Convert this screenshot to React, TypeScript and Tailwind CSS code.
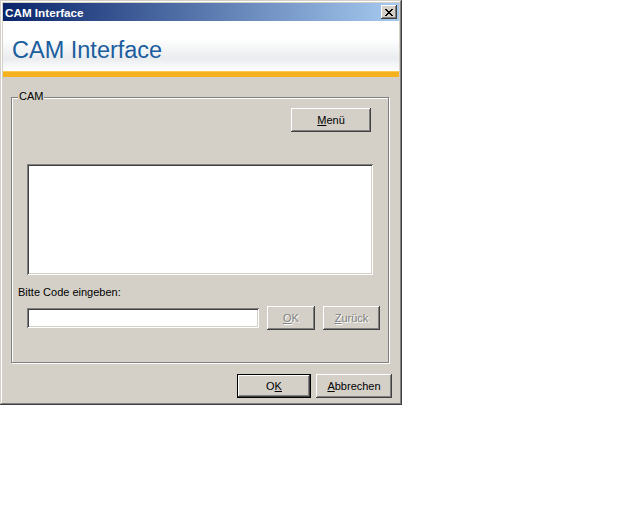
import React from "react";

const raised =
  "shadow-[inset_-1px_-1px_#404040,inset_1px_1px_#ffffff,inset_-2px_-2px_#808080,inset_2px_2px_#d4d0c8]";
const sunken =
  "shadow-[inset_1px_1px_#808080,inset_-1px_-1px_#ffffff,inset_2px_2px_#404040,inset_-2px_-2px_#d4d0c8]";

function Btn({
  children,
  w,
  disabled,
  def,
}: {
  children: React.ReactNode;
  w: string;
  disabled?: boolean;
  def?: boolean;
}) {
  if (def) {
    return (
      <div className={`${w} h-[24px] border border-black bg-[#d4d0c8]`}>
        <div
          className={`w-full h-full flex items-center justify-center ${raised} text-black`}
        >
          {children}
        </div>
      </div>
    );
  }
  return (
    <div
      className={`${w} h-[24px] bg-[#d4d0c8] flex items-center justify-center ${raised} ${
        disabled ? "text-[#808080] [text-shadow:1px_1px_#ffffff]" : "text-black"
      }`}
    >
      {children}
    </div>
  );
}

export default function App() {
  return (
    <div
      className="w-[640px] h-[512px] bg-white"
      style={{ fontFamily: '"Liberation Sans", Arial, sans-serif' }}
    >
      <div className="w-[402px] h-[405px] bg-[#d4d0c8] p-[3px] flex flex-col shadow-[inset_-1px_-1px_#404040,inset_1px_1px_#d4d0c8,inset_-2px_-2px_#808080,inset_2px_2px_#ffffff] text-[11px] leading-[13px]">
        {/* Title bar */}
        <div className="h-[18px] flex items-center justify-between bg-[linear-gradient(to_right,#0a246a,#a6caf0)] pl-[2px] pr-[2px]">
          <span className="text-white font-bold text-[11.7px] leading-[13px]">
            CAM Interface
          </span>
          <div
            className={`w-[16px] h-[14px] bg-[#d4d0c8] ${raised} flex items-center justify-center`}
          >
            <svg width="8" height="7" viewBox="0 0 8 7">
              <path
                d="M0 0h2v1h1v1h2v-1h1v-1h2v1h-1v1h-1v1h-1v1h1v1h1v1h1v1h-2v-1h-1v-1h-2v1h-1v1h-2v-1h1v-1h1v-1h1v-1h-1v-1h-1v-1h-1z"
                fill="#000"
              />
            </svg>
          </div>
        </div>
        {/* Header */}
        <div className="h-[50px] bg-[linear-gradient(to_bottom,#ffffff_0%,#ffffff_35%,#eaecef_75%,#ffffff_100%)] flex items-end pl-[9px] pb-[8px]">
          <span className="text-[23.5px] leading-[26px] text-[#1b5e9e]">
            CAM Interface
          </span>
        </div>
        <div className="h-[6px] bg-[#f5b21e] border-t border-[#fbc94e]" />
        {/* Body */}
        <div className="flex-1 flex flex-col">
          <div className="relative mt-[20px] ml-[8px] w-[378px] h-[266px] border border-[#808080] shadow-[inset_1px_1px_#ffffff,1px_1px_#ffffff] flex flex-col">
            <span className="absolute left-[6px] top-[-8px] bg-[#d4d0c8] px-[1px] text-black">
              CAM
            </span>
            <div className="flex justify-end pr-[17px] mt-[10px]">
              <Btn w="w-[80px]">
                <span>
                  <span className="underline">M</span>enü
                </span>
              </Btn>
            </div>
            <div
              className={`ml-[15px] mt-[32px] w-[346px] h-[111px] bg-white ${sunken}`}
            />
            <div className="ml-[6px] mt-[11px] text-black">Bitte Code eingeben:</div>
            <div className="flex items-center ml-[15px] mt-[7px] gap-[8px]">
              <div className={`w-[232px] h-[20px] bg-white ${sunken}`} />
              <Btn w="w-[48px]" disabled>
                <span>
                  <span className="underline">O</span>K
                </span>
              </Btn>
              <Btn w="w-[57px]" disabled>
                <span>
                  <span className="underline">Z</span>urück
                </span>
              </Btn>
            </div>
          </div>
          <div className="flex justify-end gap-[5px] mt-[11px] pr-[7px]">
            <Btn w="w-[74px]" def>
              <span>
                O<span className="underline">K</span>
              </span>
            </Btn>
            <Btn w="w-[76px]">
              <span>
                <span className="underline">A</span>bbrechen
              </span>
            </Btn>
          </div>
        </div>
      </div>
    </div>
  );
}
